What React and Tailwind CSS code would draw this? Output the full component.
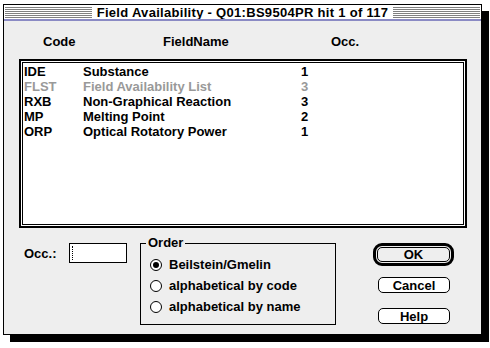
import React from 'react'

const FONT = { fontFamily: '"Liberation Sans", Arial, sans-serif' }

const rows = [
  { code: 'IDE', name: 'Substance', occ: '1' },
  { code: 'FLST', name: 'Field Availability List', occ: '3', dim: true },
  { code: 'RXB', name: 'Non-Graphical Reaction', occ: '3' },
  { code: 'MP', name: 'Melting Point', occ: '2' },
  { code: 'ORP', name: 'Optical Rotatory Power', occ: '1' },
]

const orders = ['Beilstein/Gmelin', 'alphabetical by code', 'alphabetical by name']

function Stripes() {
  return (
    <div className="flex-1 h-[11px] bg-[repeating-linear-gradient(to_bottom,#808080_0px,#808080_1px,#ffffff_1px,#ffffff_2px)]" />
  )
}

function Radio({ checked, label }) {
  return (
    <div className="flex items-center h-[21px]">
      <span className="w-[12px] h-[12px] rounded-full border border-black bg-white flex items-center justify-center">
        {checked && <span className="w-[6px] h-[6px] rounded-full bg-black" />}
      </span>
      <span className="ml-[7px]">{label}</span>
    </div>
  )
}

export default function App() {
  return (
    <div className="w-[490px] h-[348px] bg-white pl-[3px] pt-[4px] text-[13px] font-bold text-black leading-none" style={FONT}>
      <div className="w-[479px] h-[331px] border border-black bg-[#eeeeee] shadow-[7px_7px_0_0_#000] flex flex-col">
        {/* title bar */}
        <div className="h-[14px] bg-white flex items-center px-[1px] gap-[3px]">
          <Stripes />
          <span className="px-[2px] whitespace-nowrap tracking-[0.3px]">Field Availability - Q01:BS9504PR hit 1 of 117</span>
          <Stripes />
        </div>
        <div className="h-[2px] bg-[#8a8ac4]" />

        {/* column headers */}
        <div className="h-[38px] pt-[14px] flex">
          <span className="ml-[39px] w-[120px]">Code</span>
          <span className="w-[168px]">FieldName</span>
          <span>Occ.</span>
        </div>

        {/* list */}
        <div className="ml-[15px] w-[448px] h-[169px] border-2 border-black bg-white p-[1px] flex">
          <div className="flex-1 border border-black pt-[1px] pl-[1px]">
            {rows.map((r) => (
              <div key={r.code} className={`flex h-[15px] items-center ${r.dim ? 'text-[#999999]' : ''}`}>
                <span className="w-[59px]">{r.code}</span>
                <span className="w-[218px]">{r.name}</span>
                <span>{r.occ}</span>
              </div>
            ))}
          </div>
        </div>

        {/* bottom controls */}
        <div className="mt-[15px] flex items-start">
          <div className="flex items-center ml-[20px] h-[20px]">
            <span className="w-[45px]">Occ.:</span>
            <div className="w-[58px] h-[20px] border border-black bg-white pl-[2px] pt-[2px]">
              <div className="w-0 h-[14px] border-l border-dotted border-black" />
            </div>
          </div>

          <div className="relative ml-[13px] w-[196px] h-[82px] border border-black pt-[10px] pl-[9px]">
            <span className="absolute -top-[8px] left-[5px] px-[2px] bg-[#eeeeee]">Order</span>
            {orders.map((o, i) => (
              <Radio key={o} label={o} checked={i === 0} />
            ))}
          </div>

          <div className="ml-[37px] flex flex-col">
            <div className="w-[81px] h-[23px] border-[3px] border-black rounded-[9px] p-[1px] flex">
              <div className="flex-1 border border-black rounded-[5px] flex items-center justify-center">OK</div>
            </div>
            <div className="ml-[5px] mt-[11px] w-[72px] h-[16px] border border-black rounded-[5px] bg-white flex items-center justify-center">Cancel</div>
            <div className="ml-[5px] mt-[15px] w-[72px] h-[16px] border border-black rounded-[5px] bg-white flex items-center justify-center">Help</div>
          </div>
        </div>
      </div>
    </div>
  )
}
